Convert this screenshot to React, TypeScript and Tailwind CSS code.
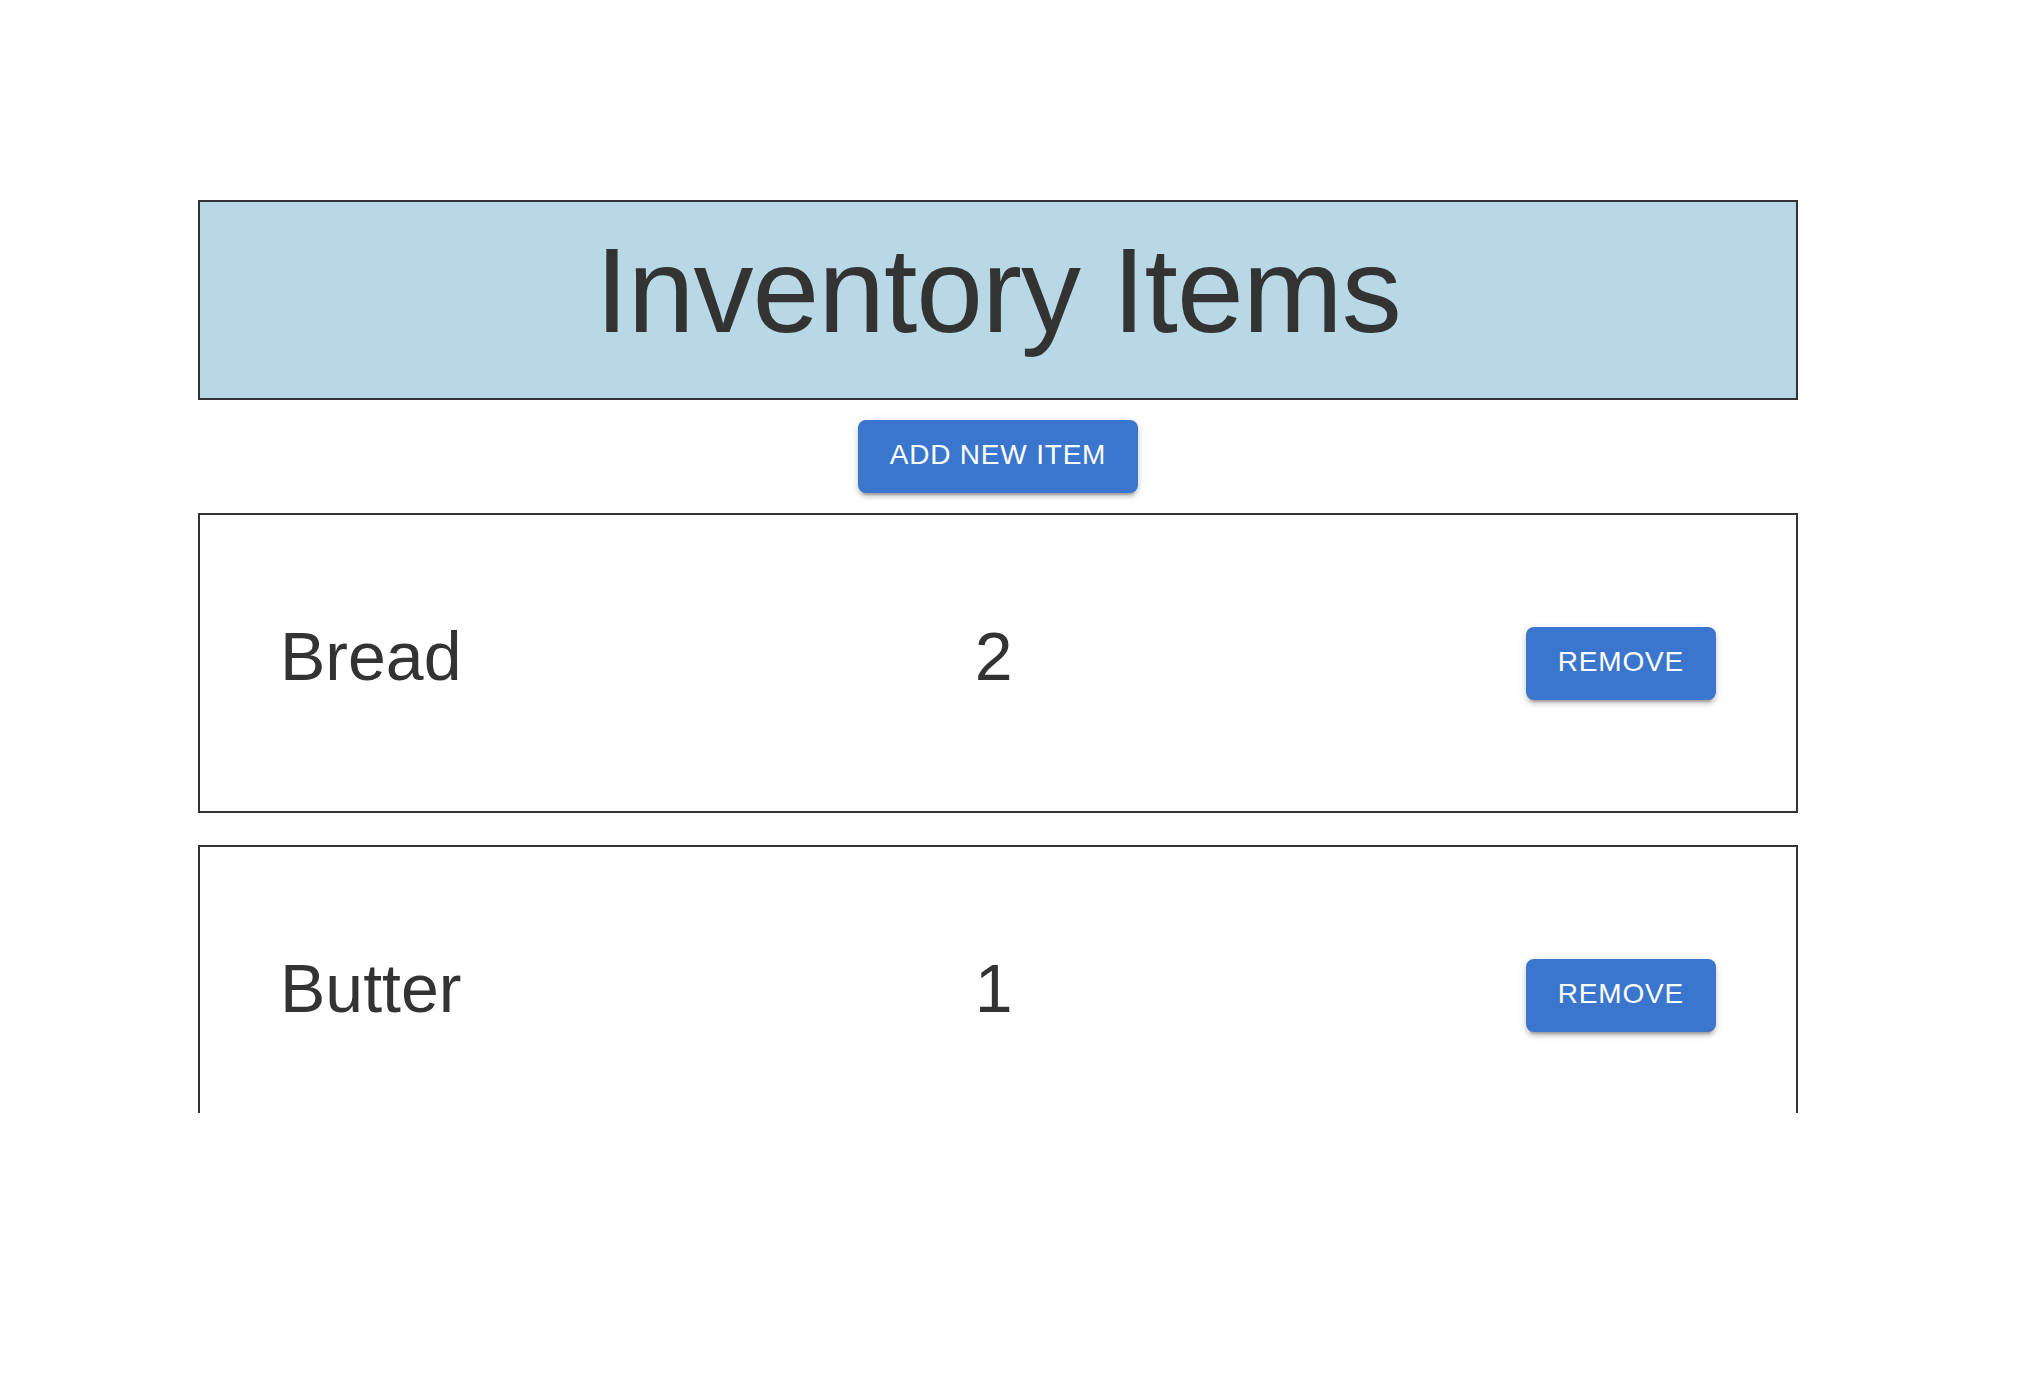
import React from 'react';

interface Item {
  name: string;
  quantity: number;
}

const items: Item[] = [
  { name: 'Bread', quantity: 2 },
  { name: 'Butter', quantity: 1 },
];

// MUI-like contained button, drawn at 2x
const buttonClass =
  "rounded-[8px] bg-[#3a76cd] px-8 pt-[10px] pb-[14px] text-[28px] leading-[49px] font-medium tracking-[0.8px] text-white uppercase " +
  "shadow-[0_6px_2px_-4px_rgba(0,0,0,0.2),0_4px_4px_0_rgba(0,0,0,0.14),0_2px_10px_0_rgba(0,0,0,0.12)]";

function ItemCard({ item }: { item: Item }) {
  return (
    <div className="mb-[32px] flex h-[300px] shrink-0 items-center justify-between border-2 border-[#333] px-[80px]">
      <span className="mb-[12px] text-[68px] leading-[1.235] text-[#333]">{item.name}</span>
      <span className="mb-[12px] text-[68px] leading-[1.235] text-[#333]">{item.quantity}</span>
      <button className={buttonClass}>Remove</button>
    </div>
  );
}

export default function App() {
  return (
    <div className="min-h-screen bg-white font-['Liberation_Sans',Arial,sans-serif]">
      <div className="ml-[198px] w-[1600px] pt-[200px]">
        <div className="flex h-[200px] items-center justify-center border-2 border-[#333] bg-[#b7d8e4] pb-[20px]">
          <h1 className="text-[120px] leading-[1.2] font-light tracking-[-1px] text-[#333]">Inventory Items</h1>
        </div>
        <div className="my-[20px] flex justify-center">
          <button className={buttonClass}>Add new item</button>
        </div>
        <div className="flex h-[600px] flex-col overflow-hidden">
          {items.map((item) => (
            <ItemCard key={item.name} item={item} />
          ))}
        </div>
      </div>
    </div>
  );
}
